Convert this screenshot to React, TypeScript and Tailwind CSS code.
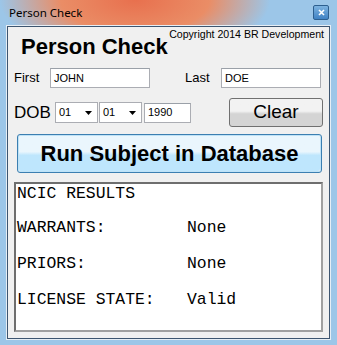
import React from "react";

const ui = "font-['Liberation_Sans',Arial,sans-serif]";

function Select({ value }: { value: string }) {
  return (
    <div className="flex h-[21px] w-[43px] items-center justify-between border border-[#abadb3] bg-white pl-[3px] pr-[5px] text-[11px] text-black">
      <span>{value}</span>
      <svg width="7" height="4" viewBox="0 0 7 4">
        <path d="M0 0h7L3.5 4z" fill="#000" />
      </svg>
    </div>
  );
}

function Field({ value, w }: { value: string; w: string }) {
  return (
    <div className={`flex h-[20px] items-center border border-[#abadb3] border-t-[#9aa0a8] bg-white pl-[3px] text-[11px] text-black ${w}`}>
      {value}
    </div>
  );
}

const results = [
  ["WARRANTS:", "None"],
  ["PRIORS:", "None"],
  ["LICENSE STATE:", "Valid"],
];

export default function App() {
  return (
    <div className="flex h-[345px] w-[337px] flex-col bg-[#a9cbe8] bg-[radial-gradient(ellipse_135px_60px_at_135px_0px,#e8704e_0%,#ea8d66_55%,#9cc6e8_100%)]">
      {/* title bar */}
      <div className="flex h-[26px] items-center justify-between pl-[9px] pr-[8px]">
        <span className="font-['Noto_Sans',sans-serif] text-[11.5px] text-black">Person Check</span>
        <div className="mt-[-2px] flex h-[15px] w-[16px] items-center justify-center rounded-[2px] border border-[#2d5f8f] bg-gradient-to-b from-[#7db3e0] to-[#3f82c4]">
          <svg width="7" height="7" viewBox="0 0 7 7">
            <path d="M1 1l5 5M6 1L1 6" stroke="#fff" strokeWidth="1.6" />
          </svg>
        </div>
      </div>

      {/* client */}
      <div className="mx-[7px] mb-[6px] flex flex-1 flex-col border border-[#3d5570] bg-[#f0f0f0] outline outline-1 outline-[#e6eef5]">
        <div className={`flex h-[40px] justify-between whitespace-nowrap ${ui}`}>
          <span className="pl-[13px] pt-[7px] text-[22px] font-bold leading-[26px] text-black">Person Check</span>
          <span className="pr-[5px] text-[10.6px] leading-[14px] text-black">Copyright 2014 BR Development</span>
        </div>

        <div className={`mt-[1px] flex items-center ${ui}`}>
          <span className="w-[42px] pl-[6px] text-[13px] text-black">First</span>
          <Field value="JOHN" w="w-[100px]" />
          <span className="ml-[35px] w-[36px] text-[13px] text-black">Last</span>
          <Field value="DOE" w="w-[100px]" />
        </div>

        <div className={`mt-[10px] flex h-[29px] items-center ${ui}`}>
          <span className="w-[47px] pl-[6px] text-[17px] text-black">DOB</span>
          <Select value="01" />
          <div className="w-[1px]" />
          <Select value="01" />
          <div className="w-[2px]" />
          <Field value="1990" w="w-[47px]" />
          <button className="ml-[38px] flex h-[29px] w-[94px] items-center justify-center rounded-[3px] border border-[#707070] bg-gradient-to-b from-[#f2f2f2] from-45% to-[#d4d4d4] to-55% text-[19px] text-black">
            Clear
          </button>
        </div>

        <div className="ml-[9px] mt-[7px] w-[305px] rounded-[3px] border border-[#3c7fb1] p-[1px] shadow-[0_0_0_1px_#bfe2f6_inset]">
          <div className={`flex h-[35px] items-center justify-center rounded-[2px] bg-gradient-to-b from-[#eaf6fd] from-45% to-[#bee6fd] to-55% text-[22px] font-bold text-black ${ui}`}>
            Run Subject in Database
          </div>
        </div>

        <div className="ml-[6px] mt-[9px] h-[150px] w-[309px] border-2 border-[#6e6e6e] border-b-[#a0a0a0] border-r-[#a0a0a0] bg-white pl-[1px] font-['Liberation_Mono','Courier_New',monospace] text-[16.4px] leading-[36px] text-black">
          <div className="leading-[20px]">NCIC RESULTS</div>
          <div className="mt-[6px]">
            {results.map(([k, v]) => (
              <div key={k} className="flex">
                <span className="w-[170px]">{k}</span>
                <span>{v}</span>
              </div>
            ))}
          </div>
        </div>
      </div>
    </div>
  );
}
